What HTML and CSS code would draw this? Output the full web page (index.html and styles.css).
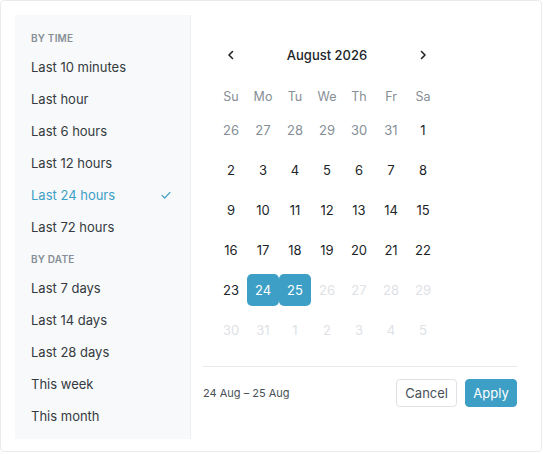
FILE: index.html
```html
<!DOCTYPE html>
<html>
  <head>
    <meta charset="utf-8" />
    <title>Date range picker</title>
    <link rel="stylesheet" href="styles.css">
  </head>
  <body>
    <div class="picker">
      <div class="presets">
        <div class="preset-label">By time</div>
        <div class="preset">Last 10 minutes</div>
        <div class="preset">Last hour</div>
        <div class="preset">Last 6 hours</div>
        <div class="preset">Last 12 hours</div>
        <div class="preset active">
          <span>Last 24 hours</span>
          <svg class="check" width="12" height="12" viewBox="0 0 12 12">
            <path d="M2 6.4 L4.7 9 L10 3.4" fill="none" stroke="currentColor" stroke-width="1.2" stroke-linecap="round" stroke-linejoin="round" />
          </svg>
        </div>
        <div class="preset">Last 72 hours</div>
        <div class="preset-label second">By date</div>
        <div class="preset">Last 7 days</div>
        <div class="preset">Last 14 days</div>
        <div class="preset">Last 28 days</div>
        <div class="preset">This week</div>
        <div class="preset">This month</div>
      </div>

      <div class="panel">
        <div class="calendar">
          <div class="cal-header">
            <button class="nav-btn">
              <svg width="12" height="12" viewBox="0 0 12 12">
                <path d="M7.5 2.5 L4 6 L7.5 9.5" fill="none" stroke="currentColor" stroke-width="1.6" stroke-linecap="round" stroke-linejoin="round" />
              </svg>
            </button>
            <div class="cal-title">August 2026</div>
            <button class="nav-btn">
              <svg width="12" height="12" viewBox="0 0 12 12">
                <path d="M4.5 2.5 L8 6 L4.5 9.5" fill="none" stroke="currentColor" stroke-width="1.6" stroke-linecap="round" stroke-linejoin="round" />
              </svg>
            </button>
          </div>

          <div class="weekdays">
            <span>Su</span><span>Mo</span><span>Tu</span><span>We</span><span>Th</span><span>Fr</span><span>Sa</span>
          </div>

          <div class="days">
            <span class="day outside">26</span>
            <span class="day outside">27</span>
            <span class="day outside">28</span>
            <span class="day outside">29</span>
            <span class="day outside">30</span>
            <span class="day outside">31</span>
            <span class="day">1</span>

            <span class="day">2</span>
            <span class="day">3</span>
            <span class="day">4</span>
            <span class="day">5</span>
            <span class="day">6</span>
            <span class="day">7</span>
            <span class="day">8</span>

            <span class="day">9</span>
            <span class="day">10</span>
            <span class="day">11</span>
            <span class="day">12</span>
            <span class="day">13</span>
            <span class="day">14</span>
            <span class="day">15</span>

            <span class="day">16</span>
            <span class="day">17</span>
            <span class="day">18</span>
            <span class="day">19</span>
            <span class="day">20</span>
            <span class="day">21</span>
            <span class="day">22</span>

            <span class="day">23</span>
            <span class="day selected">24</span>
            <span class="day selected">25</span>
            <span class="day disabled">26</span>
            <span class="day disabled">27</span>
            <span class="day disabled">28</span>
            <span class="day disabled">29</span>

            <span class="day disabled">30</span>
            <span class="day disabled">31</span>
            <span class="day disabled">1</span>
            <span class="day disabled">2</span>
            <span class="day disabled">3</span>
            <span class="day disabled">4</span>
            <span class="day disabled">5</span>
          </div>
        </div>

        <div class="footer">
          <span class="range-text">24 Aug – 25 Aug</span>
          <div class="actions">
            <button class="btn btn-default">Cancel</button>
            <button class="btn btn-primary">Apply</button>
          </div>
        </div>
      </div>
    </div>
  </body>
</html>
```

FILE: styles.css
```css
body {
  margin: 0;
  background: #ffffff;
  font-family: Inter, "Noto Sans", sans-serif;
  color: #212529;
}

.picker {
  box-sizing: border-box;
  width: 542px;
  height: 452px;
  display: flex;
  padding: 14px 14px 12px 14px;
  border: 1px solid #e9ecef;
  border-radius: 4px;
  background: #ffffff;
}

/* 左侧快捷选项 */
.presets {
  box-sizing: border-box;
  width: 176px;
  padding: 16px 0 7px 0;
  background: #f8f9fa;
  border-right: 1px solid #eceef0;
}

.preset-label {
  height: 14px;
  line-height: 14px;
  padding: 0 16px;
  margin-bottom: 6px;
  font-size: 10px;
  font-weight: 600;
  letter-spacing: 0.2px;
  text-transform: uppercase;
  color: #868e96;
}

.preset-label.second {
  margin-top: 9px;
  margin-bottom: 6px;
}

.preset {
  display: flex;
  align-items: center;
  justify-content: space-between;
  height: 32px;
  padding: 0 18px 0 16px;
  font-size: 13px;
  color: #343a40;
}

.preset.active {
  color: #3d9fc5;
}

.check {
  display: block;
}

/* 右侧日历 */
.panel {
  flex: 1;
  padding: 24px 10px 0 12px;
}

.calendar {
  width: 224px;
  margin-left: 12px;
}

.cal-header {
  display: flex;
  align-items: center;
  justify-content: space-between;
  height: 32px;
  margin-bottom: 12px;
}

.nav-btn {
  display: flex;
  justify-content: center;
  align-items: center;
  width: 32px;
  height: 32px;
  padding: 0;
  border: none;
  background: none;
  color: #212529;
}

.cal-title {
  font-size: 13px;
  font-weight: 500;
  color: #212529;
}

.weekdays {
  display: grid;
  grid-template-columns: repeat(7, 32px);
  height: 27px;
  line-height: 27px;
  text-align: center;
  font-size: 12.5px;
  color: #868e96;
}

.days {
  display: grid;
  grid-template-columns: repeat(7, 32px);
  grid-auto-rows: 40px;
  align-items: center;
}

.day {
  height: 32px;
  line-height: 32px;
  text-align: center;
  font-size: 13px;
  color: #212529;
  border-radius: 5px;
}

.day.outside {
  color: #868e96;
}

.day.disabled {
  color: #dee2e6;
}

.day.selected {
  background: #3d9fc5;
  color: #ffffff;
}

/* 底部操作 */
.footer {
  display: flex;
  align-items: center;
  justify-content: space-between;
  margin-top: 16px;
  padding-top: 12px;
  border-top: 1px solid #e9ecef;
}

.range-text {
  font-size: 11px;
  color: #495057;
}

.actions {
  display: flex;
  gap: 8px;
}

.btn {
  height: 28px;
  padding: 0 8px;
  border-radius: 4px;
  font-family: Inter, "Noto Sans", sans-serif;
  font-size: 13px;
}

.btn-default {
  border: 1px solid #dee2e6;
  background: #ffffff;
  color: #495057;
}

.btn-primary {
  width: 52px;
  padding: 0;
  border: 1px solid #3d9fc5;
  background: #3d9fc5;
  color: #ffffff;
}
```
